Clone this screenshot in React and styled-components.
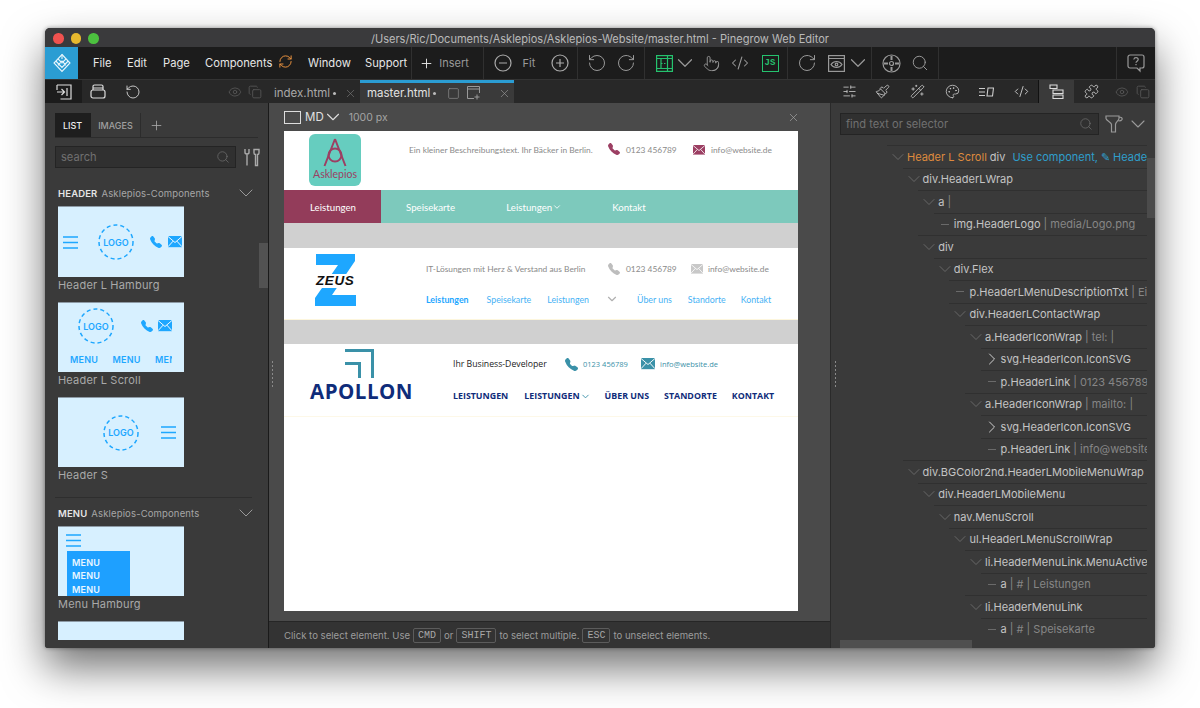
import React from "react";
import styled, { createGlobalStyle } from "styled-components";
import {
  ChevronDown,
  ChevronRight,
  CodeXml,
  Copy,
  Eye,
  Paintbrush,
  Palette,
  Plus,
  Pointer,
  Puzzle,
  RefreshCw,
  RotateCcw,
  RotateCw,
  Search,
  SlidersHorizontal,
  Square,
  WandSparkles,
  X,
} from "lucide-react";
import { BsTelephoneFill } from "react-icons/bs";

const GlobalStyle = createGlobalStyle`
  html, body, #root { margin: 0; height: 100%; background: #fff; }
  body { font-family: Inter, "Liberation Sans", sans-serif; overflow: hidden; }
  #root { padding: 28px 0 0 45px; }
  * { box-sizing: border-box; }
  svg { flex: none; }
`;

/* small drawings that the icon packages don't have */
const PineLogo = () => (
  <svg width="20" height="20" viewBox="0 0 20 20" fill="none" stroke="#e8f6fc" strokeWidth="1.1">
    <path d="M10 1.5 18 10l-8 8.5L2 10z" />
    <path d="M6 5.8 10 10l4-4.2M3.8 8 10 14.5 16.2 8M10 1.5V6M6 12.2 10 8l4 4.2" />
  </svg>
);

const MailIcon = ({ color, size = 14 }) => (
  <svg width={size} height={size * 0.8} viewBox="0 0 15 12">
    <rect width="15" height="12" fill={color} />
    <path d="M0 .5 7.5 7 15 .5M0 11.5 5.5 5.5M15 11.5 9.5 5.5" stroke="#fff" strokeWidth="1" fill="none" />
  </svg>
);

const GridIcon = () => (
  <svg width="17" height="17" viewBox="0 0 17 17" fill="none" stroke="#25c26e" strokeWidth="1.2">
    <rect x=".6" y=".6" width="15.8" height="15.8" />
    <path d="M.6 3.5h15.8M.6 13.5h15.8M5 3.5v10M11.5 .6v15.8" />
    <path d="M5 8.5h6.5" strokeDasharray="1.5 1.5" />
  </svg>
);

const BoxArrowIcon = () => (
  <svg width="16" height="16" viewBox="0 0 16 16" fill="none" stroke="#ddd" strokeWidth="1.2">
    <path d="M1 1h14v14H4.5M1 1v5" />
    <path d="M1 8h7M5.5 5 8.5 8l-3 3M11 4v8" />
  </svg>
);

const TrayIcon = () => (
  <svg width="16" height="15" viewBox="0 0 16 15" fill="none" stroke="#ddd" strokeWidth="1.2">
    <rect x="1" y="6" width="14" height="8" rx="2" />
    <path d="M3 6V2.5C3 1.6 3.6 1 4.5 1h7c.9 0 1.5.6 1.5 1.5V6" />
    <path d="M3 4h10" />
  </svg>
);

const CompassIcon = () => (
  <svg width="19" height="19" viewBox="0 0 19 19" fill="none" stroke="#999" strokeWidth="1.2">
    <circle cx="9.5" cy="9.5" r="8.5" />
    <circle cx="9.5" cy="9.5" r="2" />
    <path d="M9.5 2v4M9.5 13v4M2 9.5h4M13 9.5h4" strokeWidth="2" />
  </svg>
);

const HelpIcon = () => (
  <svg width="18" height="19" viewBox="0 0 18 19" fill="none" stroke="#999" strokeWidth="1.2">
    <path d="M3 1h12a2 2 0 0 1 2 2v9a2 2 0 0 1-2 2h-2v3l-3-3H3a2 2 0 0 1-2-2V3a2 2 0 0 1 2-2z" />
    <path d="M6.8 5.5C7 4.2 8 3.7 9 3.7c1.2 0 2.2.8 2.2 1.9 0 1.6-2.2 1.6-2.2 3.2M9 10v1.2" />
  </svg>
);

const ScreenEyeIcon = () => (
  <svg width="17" height="17" viewBox="0 0 17 17" fill="none" stroke="#999" strokeWidth="1.2">
    <rect x=".6" y=".6" width="15.8" height="15.8" />
    <path d="M.6 3.5h15.8M3 9.5s2-3 5.5-3 5.5 3 5.5 3-2 3-5.5 3-5.5-3-5.5-3z" />
    <circle cx="8.5" cy="9.5" r="1.3" />
  </svg>
);

const AddWindowIcon = () => (
  <svg width="14" height="14" viewBox="0 0 14 14" fill="none" stroke="#999" strokeWidth="1">
    <path d="M7 12.5H.5V.5h12V7M.5 3h12M10 8.5v5M7.5 11h5" />
  </svg>
);

const TreeTabIcon = () => (
  <svg width="15" height="15" viewBox="0 0 15 15" fill="none" stroke="#ddd" strokeWidth="1.1">
    <path d="M1 1h7v3.5H1zM4 6h10v3.5H4zM4 11h10v3.5H4z" />
  </svg>
);

const AttributesIcon = () => (
  <svg width="15" height="10" viewBox="0 0 15 10" fill="none" stroke="#ccc" strokeWidth="1.1">
    <path d="M0 1.5h6M0 5h6M0 8.5h6M9 1h5.5l-1 8H8z" />
  </svg>
);

const FunnelIcon = () => (
  <svg width="18" height="19" viewBox="0 0 18 19" fill="none" stroke="#999" strokeWidth="1.2">
    <path d="M1 1h13v2.5c0 2-3.5 3.5-3.5 6V17h-4V9.5C6.5 7 1 5.5 1 3.5zM14 2c2.5 0 3.5 1 3 2.5-.4 1-1.5 1.5-3.5 1.5" />
  </svg>
);

const WrenchIcon = () => (
  <svg width="18" height="19" viewBox="0 0 18 19" fill="none" stroke="#aaa" strokeWidth="1.4">
    <path d="M2 1v3.5c0 1 .8 1.5 2 1.5s2-.5 2-1.5V1M4 6v11.5M11 1.5h5V5c0 1-1 1.5-1.5 1.5v11h-2v-11C12 6.5 11 6 11 5z" />
  </svg>
);

const ZeusMark = () => (
  <svg width="41" height="52" viewBox="0 0 41 52">
    <path d="M1 0h39v7L17 41h24v11H0v-8L23 11H1z" fill="#1ea7ff" />
  </svg>
);

const ApollonMark = () => (
  <svg width="30" height="29" viewBox="0 0 30 29" fill="none" stroke="#3a91a8" strokeWidth="3">
    <path d="M1 1.5h27.5V29M1 14.5h14.5V29" />
  </svg>
);

const AsklepiosMark = () => (
  <svg width="24" height="29" viewBox="0 0 24 29" fill="none" stroke="#9c3f63" strokeWidth="2">
    <path d="M12 1 1.5 28M12 1l10.5 27" />
    <circle cx="12" cy="17" r="6.5" />
  </svg>
);

const Hamburger = () => (
  <svg width="15" height="13" viewBox="0 0 15 13" stroke="#1ea7ff" strokeWidth="1.5">
    <path d="M0 1h15M0 6.5h15M0 12h15" />
  </svg>
);

const CircleMinus = () => (
  <svg width="18" height="18" viewBox="0 0 18 18" fill="none" stroke="#aaa" strokeWidth="1.2">
    <circle cx="9" cy="9" r="8" />
    <path d="M5 9h8" />
  </svg>
);

const CirclePlus = () => (
  <svg width="18" height="18" viewBox="0 0 18 18" fill="none" stroke="#aaa" strokeWidth="1.2">
    <circle cx="9" cy="9" r="8" />
    <path d="M5 9h8M9 5v8" />
  </svg>
);

const DashedRing = styled.svg`
  position: absolute;
  inset: 0;
`;

const Window = styled.div`
  width: 1110px;
  height: 620px;
  border-radius: 5px 5px 3px 3px;
  overflow: hidden;
  background: #3a3a3a;
  box-shadow: 0 20px 42px rgba(0, 0, 0, 0.55), 0 0 4px rgba(0, 0, 0, 0.4);
  display: flex;
  flex-direction: column;
`;

const TitleBar = styled.div`
  position: relative;
  height: 19px;
  background: #3a3a3c;
  color: #b9b9b9;
  font-size: 11.05px;
  line-height: 22px;
  text-align: center;
  flex: none;
`;

const Lights = styled.div`
  position: absolute;
  left: 8px;
  top: 5px;
  display: flex;
  gap: 7px;
`;

const Light = styled.span`
  width: 10.5px;
  height: 10.5px;
  border-radius: 50%;
  background: ${(p) => p.$color};
`;

const Toolbar = styled.div`
  height: 32px;
  flex: none;
  display: flex;
  align-items: stretch;
  background: #1c1c1c;
  color: #e6e6e6;
  font-size: 11.2px;
`;

const LogoTile = styled.div`
  width: 33px;
  background: #2b9dd3;
  display: flex;
  align-items: center;
  justify-content: center;
`;

const ToolSection = styled.div`
  width: ${(p) => p.$w}px;
  flex: none;
  display: flex;
  align-items: center;
  border-right: 1px solid #303030;
`;

const MenuItem = styled.div`
  width: ${(p) => p.$w}px;
  flex: none;
  white-space: nowrap;
`;

const Slot = styled.div`
  width: ${(p) => p.$w}px;
  margin-left: ${(p) => p.$ml || 0}px;
  flex: none;
  display: flex;
  align-items: center;
  justify-content: center;
  color: ${(p) => p.$color || "#999"};
  font-size: ${(p) => p.$fs || 10.5}px;
  white-space: nowrap;
`;

const JsBox = styled.div`
  width: 17px;
  height: 17px;
  border: 1.3px solid #25c26e;
  color: #25c26e;
  font: 700 9px "Liberation Mono", monospace;
  line-height: 14px;
  text-align: center;
`;

const TabRow = styled.div`
  height: 24px;
  flex: none;
  display: flex;
  align-items: center;
  background: #282828;
  border-top: 1px solid #333;
`;

const TabLead = styled.div`
  width: 37px;
  height: 100%;
  background: #1c1c1c;
  display: flex;
  align-items: center;
  justify-content: center;
`;

const FileTab = styled.div`
  width: ${(p) => p.$w}px;
  height: 100%;
  flex: none;
  display: flex;
  align-items: center;
  padding-left: ${(p) => p.$pad}px;
  color: ${(p) => (p.$active ? "#e2e2e2" : "#a8a8a8")};
  background: ${(p) => (p.$active ? "#3a3a3a" : "transparent")};
  border-top: 3px solid ${(p) => (p.$active ? "#2b9dd3" : "transparent")};
  font-size: 11.5px;
  white-space: nowrap;
`;

const TabName = styled.span`
  width: ${(p) => p.$w}px;
  flex: none;
`;

const TabDot = styled.span`
  width: 3px;
  height: 3px;
  margin-left: 3px;
  border-radius: 50%;
  background: #bbb;
  flex: none;
`;

const TabSpacer = styled.div`
  flex: 1;
  height: 100%;
`;

const RightTabs = styled.div`
  width: 325px;
  height: 100%;
  flex: none;
  display: flex;
  align-items: center;
`;

const ActiveSideTab = styled.div`
  width: 36px;
  height: 100%;
  margin-left: 8px;
  flex: none;
  display: flex;
  align-items: center;
  justify-content: center;
  background: #3a3a3a;
  border-left: 1px solid #111;
`;

const Body = styled.div`
  flex: 1;
  min-height: 0;
  display: flex;
`;

const LeftPanel = styled.div`
  position: relative;
  width: 223px;
  flex: none;
  padding-left: 10px;
  background: #3a3a3a;
  overflow: hidden;
`;

const ListTabs = styled.div`
  width: 203px;
  height: 25px;
  margin-top: 10px;
  display: flex;
  border-bottom: 1px solid #2c2c2c;
`;

const ListTab = styled.div`
  width: ${(p) => p.$w}px;
  height: 24px;
  flex: none;
  line-height: 25px;
  text-align: center;
  font-size: 9px;
  font-weight: 500;
  background: ${(p) => (p.$active ? "#1e1e1e" : "transparent")};
  color: ${(p) => (p.$active ? "#eee" : "#a0a0a0")};
  border-right: 1px solid ${(p) => (p.$active ? "#1e1e1e" : "#2c2c2c")};
`;

const SearchLine = styled.div`
  display: flex;
  align-items: center;
  margin-top: 8px;
`;

const SearchBox = styled.div`
  width: ${(p) => p.$w}px;
  height: 22px;
  flex: none;
  padding: 0 5px;
  display: flex;
  align-items: center;
  justify-content: space-between;
  background: #303030;
  border: 1px solid #242424;
  color: #707070;
  font-size: 11.1px;
`;

const SectionHead = styled.div`
  width: 200px;
  height: 14px;
  margin: ${(p) => p.$mt}px 0 6px 3px;
  display: flex;
  align-items: center;
  justify-content: space-between;
  font-size: 9.5px;
  color: #a6a6a6;
  letter-spacing: 0.15px;
`;

const SectionName = styled.b`
  color: #e6e6e6;
  font-weight: 600;
  margin-right: 4px;
`;

const Thumb = styled.div`
  width: 126px;
  height: ${(p) => p.$h}px;
  margin-left: 3px;
  flex: none;
  background: #d7f0ff;
  border-top: 1px solid #8d9aa5;
  overflow: hidden;
  display: flex;
  flex-direction: ${(p) => (p.$column ? "column" : "row")};
  align-items: ${(p) => (p.$column ? "flex-start" : "center")};
  padding-top: ${(p) => p.$pt || 0}px;
`;

const ThumbLabel = styled.div`
  height: 16px;
  margin: 0 0 9px 3px;
  line-height: 17px;
  font-size: 11px;
  color: #a9a9a9;
  letter-spacing: 0.2px;
`;

const ThumbRow = styled.div`
  display: flex;
  align-items: center;
  flex: none;
`;

const MenuRow = styled.div`
  width: 102px;
  margin: 10px 0 0 12px;
  display: flex;
  flex: none;
  overflow: hidden;
`;

const Placed = styled.div`
  margin-left: ${(p) => p.$ml}px;
  flex: none;
  display: flex;
  align-items: center;
  color: #1ea7ff;
`;

const LogoWrap = styled.div`
  position: relative;
  width: 36px;
  height: 36px;
  margin-left: ${(p) => p.$ml}px;
  flex: none;
  display: flex;
  align-items: center;
  justify-content: center;
  color: #1ea7ff;
  font-size: 9px;
  font-weight: 600;
`;

const LogoCircle = ({ $ml }) => (
  <LogoWrap $ml={$ml}>
    <DashedRing width="36" height="36" viewBox="0 0 36 36" fill="none" stroke="#1ea7ff" strokeWidth="1.5" strokeDasharray="4 3">
      <circle cx="18" cy="18" r="17" />
    </DashedRing>
    LOGO
  </LogoWrap>
);

const MenuWord = styled.span`
  flex: none;
  color: #1ea7ff;
  font-size: 9px;
  font-weight: 600;
  letter-spacing: 0.2px;
  width: 42.5px;
`;

const MenuBox = styled.div`
  width: 63px;
  height: 46px;
  margin: 4px 0 0 9px;
  padding: 5px 5px 0;
  background: #1ea0ff;
  color: #eaf7ff;
  font-size: 9px;
  font-weight: 600;
  line-height: 13.3px;
  letter-spacing: 0.2px;
`;

const Divider = styled.div`
  width: 197px;
  height: 1px;
  margin-top: 14px;
  background: #2e2e2e;
`;

const SideScroll = styled.div`
  position: absolute;
  right: 0;
  top: 140px;
  width: 9px;
  height: 45px;
  background: #525252;
`;

const Center = styled.div`
  position: relative;
  width: 562px;
  flex: none;
  display: flex;
  flex-direction: column;
  background: #4a4a4a;
  border-left: 1px solid #1a1a1a;
`;

const Grip = styled.div`
  position: absolute;
  left: ${(p) => p.$left}px;
  top: 257px;
  width: 3px;
  height: 28px;
  background: radial-gradient(circle, #8a8a8a 0.8px, transparent 1px) 0 0 / 3px 4px;
`;

const ViewBar = styled.div`
  height: 28px;
  flex: none;
  padding-left: 15px;
  display: flex;
  align-items: center;
  color: #e0e0e0;
  font-size: 11.5px;
`;

const SizeBox = styled.div`
  width: 17px;
  height: 13px;
  border: 1.3px solid #ddd;
`;

const PxLabel = styled.span`
  margin-left: 8px;
  color: #a4a4a4;
  font-size: 10.5px;
`;

const ViewLabel = styled.span`
  margin-left: 4px;
`;

const ViewClose = styled.div`
  margin-left: auto;
  margin-right: 30px;
  display: flex;
  color: #aaa;
`;

const PreviewPage = styled.div`
  width: 514px;
  height: 480px;
  margin-left: 15px;
  flex: none;
  background: #fff;
  overflow: hidden;
  font-family: Lato, "Open Sans", sans-serif;
  font-size: 8.4px;
  color: #8a8a8a;
`;

const Spacer = styled.div`
  height: ${(p) => p.$h}px;
  background: #d0d0d0;
`;

const TopRow = styled.div`
  height: ${(p) => p.$h}px;
  display: flex;
  align-items: ${(p) => p.$align || "flex-start"};
  padding-top: ${(p) => p.$pt || 0}px;
  color: ${(p) => p.$color || "inherit"};
  font-size: ${(p) => (p.$fs ? `${p.$fs}px` : "inherit")};
`;

const Tile = styled.div`
  width: 52px;
  height: 52px;
  margin: 3px 0 0 25px;
  flex: none;
  border-radius: 6px;
  background: #66cdbf;
  color: #9c3f63;
  font-size: 10.5px;
  display: flex;
  flex-direction: column;
  align-items: center;
  padding-top: 4px;
  line-height: 14px;
`;

const Info = styled.span`
  margin-left: ${(p) => p.$ml}px;
  margin-top: ${(p) => p.$mt || 0}px;
  flex: none;
  white-space: nowrap;
  color: ${(p) => p.$color || "inherit"};
  font-size: ${(p) => (p.$fs ? `${p.$fs}px` : "inherit")};
  display: flex;
  align-items: center;
  width: ${(p) => (p.$w ? `${p.$w}px` : "auto")};
`;

const Teal = styled.div`
  height: 33px;
  background: #7dc9bc;
  display: flex;
  align-items: center;
  color: #fff;
  font-size: 9.7px;
`;

const TealActive = styled.div`
  width: 97px;
  height: 100%;
  flex: none;
  padding-left: 26px;
  line-height: 35px;
  background: #933c5a;
`;

const NavItem = styled.span`
  flex: none;
  display: flex;
  align-items: center;
  margin-left: ${(p) => p.$ml}px;
  white-space: nowrap;
  color: ${(p) => p.$color || "inherit"};
  font-weight: ${(p) => p.$weight || 400};
`;

const ZeusBlock = styled.div`
  position: relative;
  width: 41px;
  height: 52px;
  margin: 6px 0 0 31px;
  flex: none;
`;

const ZeusWord = styled.span`
  position: absolute;
  left: 0;
  top: 20px;
  color: #111;
  font: italic 700 13.5px "Liberation Sans", sans-serif;
  letter-spacing: 0.6px;
  background: #fff;
  line-height: 14px;
  padding: 0 1px;
`;

const ZeusBody = styled.div`
  height: 72px;
  border-bottom: 1px solid #fdf6dd;
  display: flex;
`;

const Stack = styled.div`
  flex: 1;
  min-width: 0;
  display: flex;
  flex-direction: column;
`;

const ApollonBody = styled.div`
  height: 73px;
  border-bottom: 1px solid #fdf8e8;
  display: flex;
  font-family: "Open Sans", sans-serif;
`;

const ApollonLogo = styled.div`
  width: 103px;
  margin: 5px 0 0 26px;
  flex: none;
  display: flex;
  flex-direction: column;
  align-items: center;
  color: #0f2c7a;
  font-size: 20.5px;
  font-weight: 700;
  line-height: 26px;
  letter-spacing: 0.5px;
  svg {
    margin-right: 6px;
  }
`;

const StatusBar = styled.div`
  height: 27px;
  margin-top: 10px;
  flex: none;
  padding-left: 15px;
  display: flex;
  align-items: center;
  gap: 3px;
  background: #333;
  border-top: 1px solid #262626;
  color: #9c9c9c;
  font-size: 9.6px;
  white-space: nowrap;
`;

const Key = styled.span`
  height: 15px;
  padding: 0 4px;
  border: 1px solid #5c5c5c;
  border-radius: 2px;
  font: 10px "Liberation Mono", monospace;
  line-height: 13px;
  color: #a8a8a8;
`;

const RightPanel = styled.div`
  position: relative;
  flex: 1;
  min-width: 0;
  padding-left: 9px;
  background: #3a3a3a;
  border-left: 1px solid #2a2a2a;
  overflow: hidden;
`;

const RightSearch = styled.div`
  height: 22px;
  display: flex;
  align-items: center;
  margin-top: 10px;
`;

const Tree = styled.div`
  width: 307px;
  margin-top: 10px;
  padding-left: 47px;
  overflow: hidden;
`;

const Row = styled.div`
  height: 22.5px;
  margin-left: ${(p) => p.$level * 15.6}px;
  padding-left: 5px;
  display: flex;
  align-items: center;
  border-top: 1px solid #303030;
  font-size: 11px;
  color: #c4c4c4;
  white-space: nowrap;
  overflow: hidden;
`;

const RowIcon = styled.span`
  width: 12px;
  margin-right: 3px;
  flex: none;
  display: flex;
  align-items: center;
  justify-content: center;
  color: ${(p) => (p.$open ? "#707070" : "#d0d0d0")};
`;

const Dash = styled.span`
  width: 8px;
  height: 1px;
  background: #6a6a6a;
`;

const Meta = styled.span`
  color: #868686;
  margin-left: 3px;
`;

const Orange = styled.span`
  color: #de8a3e;
  margin-right: 3px;
`;

const Cyan = styled.span`
  color: #2f9ecb;
  margin-left: 7px;
`;

const VScroll = styled.div`
  position: absolute;
  right: 0;
  top: 55px;
  width: 8px;
  height: 60px;
  background: #4b4b4b;
`;

const HScroll = styled.div`
  position: absolute;
  left: 9px;
  bottom: 0;
  width: 132px;
  height: 8px;
  background: #4f4f4f;
`;

const treeRows = [
  { level: 1, type: "open", name: "div.HeaderLWrap" },
  { level: 2, type: "open", name: "a", meta: "|" },
  { level: 3, type: "leaf", name: "img.HeaderLogo", meta: "| media/Logo.png" },
  { level: 2, type: "open", name: "div" },
  { level: 3, type: "open", name: "div.Flex" },
  { level: 4, type: "leaf", name: "p.HeaderLMenuDescriptionTxt", meta: "| Ein" },
  { level: 4, type: "open", name: "div.HeaderLContactWrap" },
  { level: 5, type: "open", name: "a.HeaderIconWrap", meta: "| tel: |" },
  { level: 6, type: "closed", name: "svg.HeaderIcon.IconSVG" },
  { level: 6, type: "leaf", name: "p.HeaderLink", meta: "| 0123 456789" },
  { level: 5, type: "open", name: "a.HeaderIconWrap", meta: "| mailto: |" },
  { level: 6, type: "closed", name: "svg.HeaderIcon.IconSVG" },
  { level: 6, type: "leaf", name: "p.HeaderLink", meta: "| info@website.de" },
  { level: 1, type: "open", name: "div.BGColor2nd.HeaderLMobileMenuWrap" },
  { level: 2, type: "open", name: "div.HeaderLMobileMenu" },
  { level: 3, type: "open", name: "nav.MenuScroll" },
  { level: 4, type: "open", name: "ul.HeaderLMenuScrollWrap" },
  { level: 5, type: "open", name: "li.HeaderMenuLink.MenuActive" },
  { level: 6, type: "leaf", name: "a", meta: "| # | Leistungen" },
  { level: 5, type: "open", name: "li.HeaderMenuLink" },
  { level: 6, type: "leaf", name: "a", meta: "| # | Speisekarte" },
];

const TreeIcon = ({ type }) => {
  if (type === "leaf") return <RowIcon><Dash /></RowIcon>;
  if (type === "closed") return <RowIcon><ChevronRight size={20} strokeWidth={1.2} /></RowIcon>;
  return <RowIcon $open><ChevronDown size={20} strokeWidth={1} /></RowIcon>;
};

const App = () => {
  return (
    <>
      <GlobalStyle />
      <Window>
        <TitleBar>
          <Lights>
            <Light $color="#f0524f" />
            <Light $color="#e8b92e" />
            <Light $color="#4cc13f" />
          </Lights>
          /Users/Ric/Documents/Asklepios/Asklepios-Website/master.html - Pinegrow Web Editor
        </TitleBar>

        <Toolbar>
          <LogoTile><PineLogo /></LogoTile>
          <ToolSection $w={334}>
            <Slot $w={15} />
            <MenuItem $w={34}>File</MenuItem>
            <MenuItem $w={36}>Edit</MenuItem>
            <MenuItem $w={42}>Page</MenuItem>
            <MenuItem $w={73}>Components</MenuItem>
            <MenuItem $w={30}><RefreshCw size={15} color="#e8913f" strokeWidth={1.6} /></MenuItem>
            <MenuItem $w={57}>Window</MenuItem>
            <MenuItem $w={47}>Support</MenuItem>
          </ToolSection>
          <ToolSection $w={72}>
            <Slot $w={14} $ml={7} $color="#e6e6e6"><Plus size={15} strokeWidth={1.5} /></Slot>
            <Slot $w={30} $ml={6} $color="#999" $fs={11}>Insert</Slot>
          </ToolSection>
          <ToolSection $w={94}>
            <Slot $w={38}><CircleMinus /></Slot>
            <Slot $w={14} $fs={11}>Fit</Slot>
            <Slot $w={20} $ml={14}><CirclePlus /></Slot>
          </ToolSection>
          <ToolSection $w={67}>
            <Slot $w={20} $ml={9}><RotateCcw size={20} strokeWidth={1.2} /></Slot>
            <Slot $w={20} $ml={9}><RotateCw size={20} strokeWidth={1.2} /></Slot>
          </ToolSection>
          <ToolSection $w={143}>
            <Slot $w={17} $ml={11}><GridIcon /></Slot>
            <Slot $w={16} $ml={4}><ChevronDown size={26} strokeWidth={1.1} /></Slot>
            <Slot $w={18} $ml={9}><Pointer size={17} strokeWidth={1.3} /></Slot>
            <Slot $w={18} $ml={11}><CodeXml size={18} strokeWidth={1.4} /></Slot>
            <Slot $w={18} $ml={12}><JsBox>JS</JsBox></Slot>
          </ToolSection>
          <ToolSection $w={84}>
            <Slot $w={20} $ml={9}><RotateCw size={20} strokeWidth={1.2} /></Slot>
            <Slot $w={18} $ml={10}><ScreenEyeIcon /></Slot>
            <Slot $w={14} $ml={6}><ChevronDown size={26} strokeWidth={1.1} /></Slot>
          </ToolSection>
          <ToolSection $w={67}>
            <Slot $w={20} $ml={9}><CompassIcon /></Slot>
            <Slot $w={20} $ml={9}><Search size={18} strokeWidth={1.3} /></Slot>
          </ToolSection>
          <ToolSection $w={178} />
          <Slot $w={20} $ml={9}><HelpIcon /></Slot>
        </Toolbar>

        <TabRow>
          <TabLead><BoxArrowIcon /></TabLead>
          <Slot $w={18} $ml={7}><TrayIcon /></Slot>
          <Slot $w={18} $ml={17} $color="#ddd"><RotateCcw size={16} strokeWidth={1.3} /></Slot>
          <Slot $w={18} $ml={84} $color="#5c5c5c"><Eye size={14} strokeWidth={1.3} /></Slot>
          <Slot $w={18} $ml={2} $color="#5c5c5c"><Copy size={14} strokeWidth={1.3} /></Slot>
          <FileTab $w={96} $pad={10}>
            <TabName $w={56}>index.html</TabName>
            <TabDot />
            <Slot $w={12} $ml={8} $color="#777"><X size={13} strokeWidth={1.2} /></Slot>
          </FileTab>
          <FileTab $w={154} $pad={7} $active>
            <TabName $w={63}>master.html</TabName>
            <TabDot />
            <Slot $w={14} $ml={10}><Square size={13} strokeWidth={1.1} /></Slot>
            <Slot $w={14} $ml={7}><AddWindowIcon /></Slot>
            <Slot $w={14} $ml={16}><X size={13} strokeWidth={1.2} /></Slot>
          </FileTab>
          <TabSpacer />
          <RightTabs>
            <Slot $w={18} $ml={10} $color="#ccc"><SlidersHorizontal size={15} strokeWidth={1.3} /></Slot>
            <Slot $w={18} $ml={15} $color="#ccc"><Paintbrush size={15} strokeWidth={1.3} /></Slot>
            <Slot $w={18} $ml={17} $color="#ccc"><WandSparkles size={15} strokeWidth={1.3} /></Slot>
            <Slot $w={18} $ml={17} $color="#ccc"><Palette size={15} strokeWidth={1.3} /></Slot>
            <Slot $w={18} $ml={16} $color="#ccc"><AttributesIcon /></Slot>
            <Slot $w={18} $ml={17} $color="#ccc"><CodeXml size={15} strokeWidth={1.5} /></Slot>
            <ActiveSideTab><TreeTabIcon /></ActiveSideTab>
            <Slot $w={18} $ml={8} $color="#ddd"><Puzzle size={15} strokeWidth={1.3} /></Slot>
            <Slot $w={18} $ml={13} $color="#5c5c5c"><Eye size={14} strokeWidth={1.3} /></Slot>
            <Slot $w={18} $ml={3} $color="#5c5c5c"><Copy size={14} strokeWidth={1.3} /></Slot>
          </RightTabs>
        </TabRow>

        <Body>
          <LeftPanel>
            <ListTabs>
              <ListTab $w={36} $active>LIST</ListTab>
              <ListTab $w={50}>IMAGES</ListTab>
              <Slot $w={14} $ml={8} $color="#aaa"><Plus size={15} strokeWidth={1.3} /></Slot>
            </ListTabs>
            <SearchLine>
              <SearchBox $w={181}>
                search
                <Search size={14} strokeWidth={1.3} color="#6e6e6e" />
              </SearchBox>
              <Slot $w={18} $ml={7}><WrenchIcon /></Slot>
            </SearchLine>

            <SectionHead $mt={18}>
              <span><SectionName>HEADER</SectionName>Asklepios-Components</span>
              <ChevronDown size={24} strokeWidth={1} color="#999" />
            </SectionHead>
            <Thumb $h={71}>
              <Placed $ml={5}><Hamburger /></Placed>
              <LogoCircle $ml={20} />
              <Placed $ml={16}><BsTelephoneFill size={12} /></Placed>
              <Placed $ml={6}><MailIcon color="#1ea7ff" /></Placed>
            </Thumb>
            <ThumbLabel>Header L Hamburg</ThumbLabel>
            <Thumb $h={70} $column $pt={5}>
              <ThumbRow>
                <LogoCircle $ml={20} />
                <Placed $ml={27}><BsTelephoneFill size={12} /></Placed>
                <Placed $ml={5}><MailIcon color="#1ea7ff" /></Placed>
              </ThumbRow>
              <MenuRow>
                <MenuWord>MENU</MenuWord>
                <MenuWord>MENU</MenuWord>
                <MenuWord>MENU</MenuWord>
              </MenuRow>
            </Thumb>
            <ThumbLabel>Header L Scroll</ThumbLabel>
            <Thumb $h={70}>
              <LogoCircle $ml={45} />
              <Placed $ml={22}><Hamburger /></Placed>
            </Thumb>
            <ThumbLabel>Header S</ThumbLabel>

            <Divider />
            <SectionHead $mt={8}>
              <span><SectionName>MENU</SectionName>Asklepios-Components</span>
              <ChevronDown size={24} strokeWidth={1} color="#999" />
            </SectionHead>
            <Thumb $h={70} $column $pt={7}>
              <Placed $ml={8}><Hamburger /></Placed>
              <MenuBox>MENU<br />MENU<br />MENU</MenuBox>
            </Thumb>
            <ThumbLabel>Menu Hamburg</ThumbLabel>
            <Thumb $h={19} />
            <SideScroll />
          </LeftPanel>

          <Center>
            <Grip $left={2} />
            <ViewBar>
              <SizeBox />
              <ViewLabel>MD</ViewLabel>
              <Slot $w={16} $ml={1} $color="#ddd"><ChevronDown size={22} strokeWidth={1.2} /></Slot>
              <PxLabel>1000 px</PxLabel>
              <ViewClose><X size={13} strokeWidth={1.2} /></ViewClose>
            </ViewBar>

            <PreviewPage>
              <TopRow $h={59}>
                <Tile>
                  <AsklepiosMark />
                  Asklepios
                </Tile>
                <Info $ml={48} $mt={14} $w={183}>Ein kleiner Beschreibungstext. Ihr Bäcker in Berlin.</Info>
                <Info $ml={16} $mt={12} $color="#9c3f63"><BsTelephoneFill size={12} /></Info>
                <Info $ml={6} $mt={14} $w={51}>0123 456789</Info>
                <Info $ml={16} $mt={14}><MailIcon color="#9c3f63" size={12} /></Info>
                <Info $ml={6} $mt={14}>info@website.de</Info>
              </TopRow>
              <Teal>
                <TealActive>Leistungen</TealActive>
                <NavItem $ml={25}>Speisekarte</NavItem>
                <NavItem $ml={51}>Leistungen <ChevronDown size={10} /></NavItem>
                <NavItem $ml={50}>Kontakt</NavItem>
              </Teal>
              <Spacer $h={25} />

              <ZeusBody>
                <ZeusBlock>
                  <ZeusMark />
                  <ZeusWord>ZEUS</ZeusWord>
                </ZeusBlock>
                <Stack>
                  <TopRow $h={32} $align="center" $pt={10}>
                    <Info $ml={70} $w={166}>IT-Lösungen mit Herz &amp; Verstand aus Berlin</Info>
                    <Info $ml={16} $color="#bdbdbd"><BsTelephoneFill size={12} /></Info>
                    <Info $ml={6} $w={51}>0123 456789</Info>
                    <Info $ml={14}><MailIcon color="#c8c8c8" size={12} /></Info>
                    <Info $ml={5}>info@website.de</Info>
                  </TopRow>
                  <TopRow $h={30} $align="center" $pt={8} $color="#47b2f5" $fs={8.8}>
                    <NavItem $ml={70} $weight={700} $color="#1ea7ff">Leistungen</NavItem>
                    <NavItem $ml={18}>Speisekarte</NavItem>
                    <NavItem $ml={16}>Leistungen</NavItem>
                    <NavItem $ml={16} $color="#b0b0b0"><ChevronDown size={14} strokeWidth={2} /></NavItem>
                    <NavItem $ml={18}>Über uns</NavItem>
                    <NavItem $ml={16}>Standorte</NavItem>
                    <NavItem $ml={15}>Kontakt</NavItem>
                  </TopRow>
                </Stack>
              </ZeusBody>
              <Spacer $h={24} />

              <ApollonBody>
                <ApollonLogo>
                  <ApollonMark />
                  APOLLON
                </ApollonLogo>
                <Stack>
                  <TopRow $h={40} $align="center">
                    <Info $ml={40} $color="#222" $fs={8.7} $w={95}>Ihr Business-Developer</Info>
                    <Info $ml={17} $color="#3a91a8"><BsTelephoneFill size={13} /></Info>
                    <Info $ml={5} $color="#3a91a8" $fs={7.5} $w={42}>0123 456789</Info>
                    <Info $ml={16}><MailIcon color="#3a91a8" size={14} /></Info>
                    <Info $ml={5} $color="#3a91a8" $fs={7.5}>info@website.de</Info>
                  </TopRow>
                  <TopRow $h={24} $align="center" $color="#0f2c7a" $fs={8.85}>
                    <NavItem $ml={40} $weight={700}>LEISTUNGEN</NavItem>
                    <NavItem $ml={16} $weight={700}>LEISTUNGEN</NavItem>
                    <NavItem $ml={0} $color="#3a91a8"><ChevronDown size={11} strokeWidth={2} /></NavItem>
                    <NavItem $ml={14} $weight={700}>ÜBER UNS</NavItem>
                    <NavItem $ml={15} $weight={700}>STANDORTE</NavItem>
                    <NavItem $ml={15} $weight={700}>KONTAKT</NavItem>
                  </TopRow>
                </Stack>
              </ApollonBody>
            </PreviewPage>

            <StatusBar>
              Click to select element. Use <Key>CMD</Key> or <Key>SHIFT</Key> to select multiple. <Key>ESC</Key> to unselect elements.
            </StatusBar>
          </Center>

          <RightPanel>
            <Grip $left={3} />
            <RightSearch>
              <SearchBox $w={259}>
                find text or selector
                <Search size={14} strokeWidth={1.3} color="#6e6e6e" />
              </SearchBox>
              <Slot $w={18} $ml={6}><FunnelIcon /></Slot>
              <Slot $w={16} $ml={7}><ChevronDown size={24} strokeWidth={1.1} color="#999" /></Slot>
            </RightSearch>
            <Tree>
              <Row $level={0}>
                <TreeIcon type="open" />
                <Orange>Header L Scroll</Orange>div
                <Cyan>Use component, ✎ Header L Scroll</Cyan>
              </Row>
              {treeRows.map((row, i) => (
                <Row key={i} $level={row.level}>
                  <TreeIcon type={row.type} />
                  {row.name}
                  {row.meta && <Meta>{row.meta}</Meta>}
                </Row>
              ))}
            </Tree>
            <VScroll />
            <HScroll />
          </RightPanel>
        </Body>
      </Window>
    </>
  );
};

export default App;
